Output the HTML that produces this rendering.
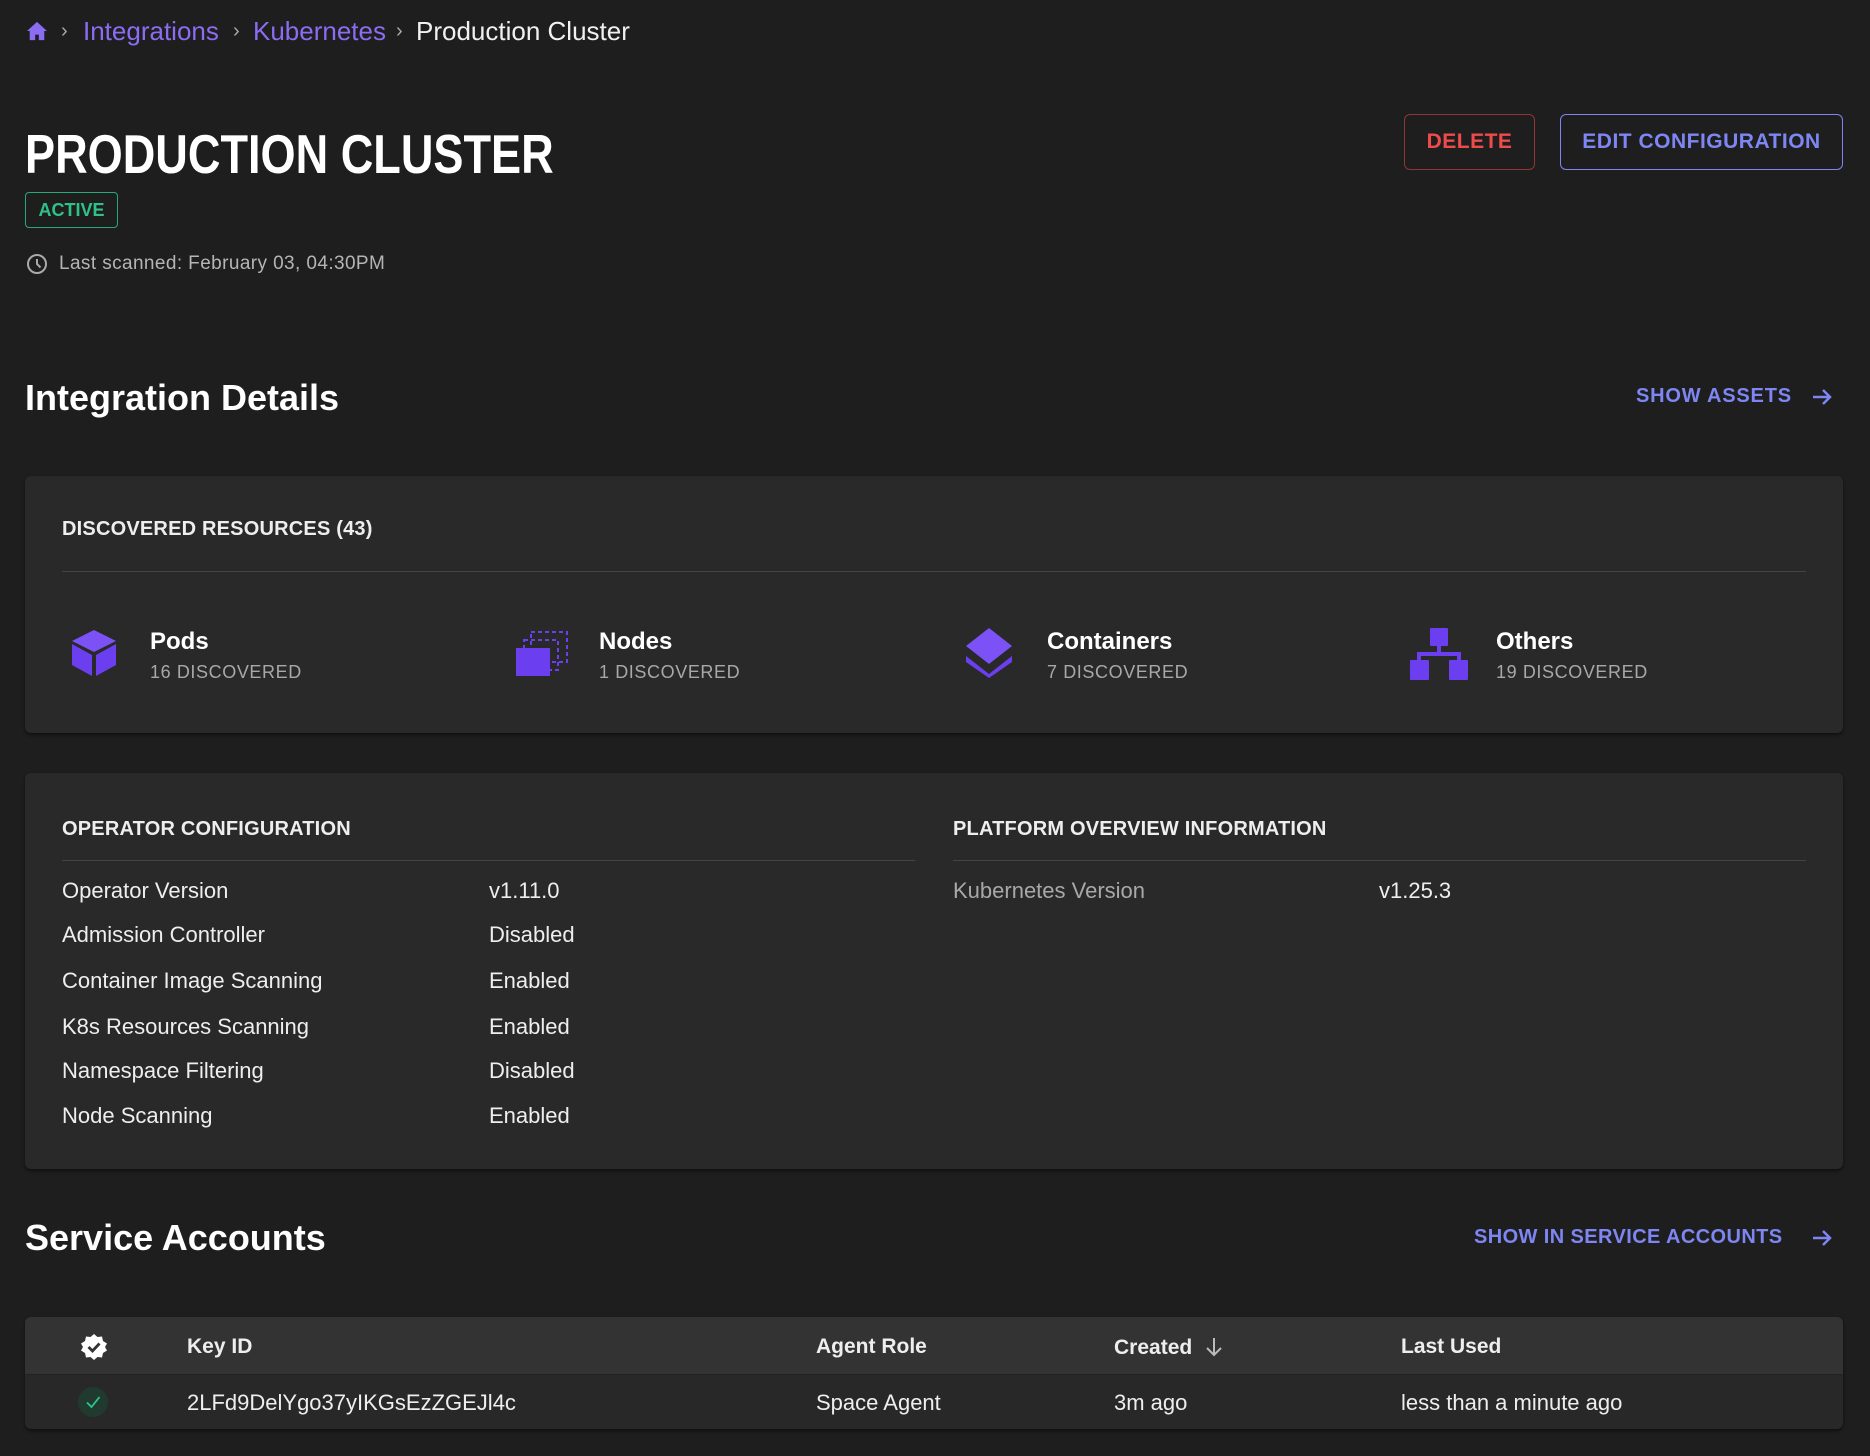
<!DOCTYPE html>
<html><head><meta charset="utf-8"><style>
*{margin:0;padding:0;box-sizing:border-box}
body{width:1870px;height:1456px;background:#1e1e1e;font-family:"Liberation Sans",sans-serif;color:#fff;position:relative;overflow:hidden}
.a{position:absolute;white-space:nowrap}
.bc{font-size:26px;top:16px}
.pur{color:#8b6cf3}
.sep{color:#aaa;font-size:20px;top:20px}
.btn{position:absolute;border-radius:6px;font-size:21px;font-weight:bold;letter-spacing:.5px;display:flex;align-items:center;justify-content:center}
.h2{font-size:36px;font-weight:bold}
.link{color:#7d86f2;font-size:20px;font-weight:bold;letter-spacing:.8px}
.card{position:absolute;left:25px;width:1818px;background:#292929;border-radius:6px;box-shadow:0 2px 3px rgba(0,0,0,.5)}
.ch{font-size:20px;font-weight:bold;letter-spacing:.2px;color:#eee}
.it{font-size:24px;font-weight:bold}
.sub{font-size:18px;color:#a8a8a8;letter-spacing:.6px}
.row{font-size:22px;color:#eee}
.th{font-size:21px;font-weight:bold;color:#eee}
</style></head><body>
<svg class="a" style="left:26px;top:21px" width="22" height="20" viewBox="0 0 24 22"><path d="M12 1 L1 11 H4 V21 H10 V15 H14 V21 H20 V11 H23 Z" fill="#8b6cf3"/></svg>
<div class="a sep" style="left:61px">›</div>
<div class="a bc pur" style="left:83px">Integrations</div>
<div class="a sep" style="left:233px">›</div>
<div class="a bc pur" style="left:253px">Kubernetes</div>
<div class="a sep" style="left:396px">›</div>
<div class="a bc" style="left:416px;color:#f0f0f0">Production Cluster</div>

<div class="a" style="left:25px;top:122px;font-size:55px;font-weight:bold;transform:scaleX(.82);transform-origin:left">PRODUCTION CLUSTER</div>
<div class="a" style="left:25px;top:192px;width:93px;height:36px;border:1px solid #27a878;border-radius:4px;color:#2ec28a;font-size:18px;font-weight:bold;text-align:center;line-height:34px">ACTIVE</div>
<svg class="a" style="left:26px;top:253px" width="22" height="22" viewBox="0 0 22 22"><circle cx="11" cy="11" r="9" fill="none" stroke="#aaa" stroke-width="2"/><path d="M11 6 V11 L14.5 14.5" fill="none" stroke="#aaa" stroke-width="2"/></svg>
<div class="a" style="left:59px;top:253px;font-size:19px;color:#b5b5b5;letter-spacing:.4px">Last scanned: February 03, 04:30PM</div>

<div class="btn" style="left:1404px;top:114px;width:131px;height:56px;border:1px solid #8e3636;color:#ef4b4b">DELETE</div>
<div class="btn" style="left:1560px;top:114px;width:283px;height:56px;border:1.5px solid #7d86f2;color:#7d86f2">EDIT CONFIGURATION</div>

<div class="a h2" style="left:25px;top:377px">Integration Details</div>
<div class="a link" style="left:1636px;top:385px">SHOW ASSETS</div>
<svg class="a" style="left:1810px;top:385px" width="24" height="24" viewBox="0 0 24 24"><path d="M3 12 H20 M13 5 L20 12 L13 19" fill="none" stroke="#7d86f2" stroke-width="2.5"/></svg>

<div class="card" style="top:476px;height:257px"></div>
<div class="a ch" style="left:62px;top:518px">DISCOVERED RESOURCES (43)</div>
<div class="a" style="left:62px;top:571px;width:1744px;height:1px;background:#444"></div>

<svg class="a" style="left:70px;top:628px" width="48" height="50" viewBox="0 0 48 50"><path d="M24 2 L46 13 L24 24 L2 13 Z" fill="#7c52f6"/><path d="M2 16 L22 27 V48 L2 37 Z" fill="#6b3ff0"/><path d="M46 16 L26 27 V48 L46 37 Z" fill="#6b3ff0"/></svg>
<div class="a it" style="left:150px;top:628px">Pods</div>
<div class="a sub" style="left:150px;top:662px">16 DISCOVERED</div>

<svg class="a" style="left:515px;top:630px" width="56" height="48" viewBox="0 0 56 48"><rect x="16" y="2" width="36" height="30" fill="none" stroke="#6b3ff0" stroke-width="2" stroke-dasharray="4 3"/><rect x="9" y="10" width="34" height="30" fill="none" stroke="#6b3ff0" stroke-width="2" stroke-dasharray="4 3"/><rect x="1" y="18" width="34" height="28" fill="#6b3ff0"/></svg>
<div class="a it" style="left:599px;top:628px">Nodes</div>
<div class="a sub" style="left:599px;top:662px">1 DISCOVERED</div>

<svg class="a" style="left:964px;top:626px" width="50" height="52" viewBox="0 0 50 52"><path d="M25 2 L48 20 L25 38 L2 20 Z" fill="#7c52f6"/><path d="M2 30 L25 48 L48 30 L48 36 L25 52 L2 36 Z" fill="#6b3ff0"/></svg>
<div class="a it" style="left:1047px;top:628px">Containers</div>
<div class="a sub" style="left:1047px;top:662px">7 DISCOVERED</div>

<svg class="a" style="left:1410px;top:628px" width="58" height="52" viewBox="0 0 58 52"><rect x="20" y="0" width="18" height="18" rx="1" fill="#6b3ff0"/><path d="M29 18 V26 M9 34 V26 H49 V34" fill="none" stroke="#6b3ff0" stroke-width="4"/><rect x="0" y="32" width="19" height="20" rx="1" fill="#6b3ff0"/><rect x="39" y="32" width="19" height="20" rx="1" fill="#6b3ff0"/></svg>
<div class="a it" style="left:1496px;top:628px">Others</div>
<div class="a sub" style="left:1496px;top:662px">19 DISCOVERED</div>

<div class="card" style="top:773px;height:396px"></div>
<div class="a ch" style="left:62px;top:818px">OPERATOR CONFIGURATION</div>
<div class="a ch" style="left:953px;top:818px">PLATFORM OVERVIEW INFORMATION</div>
<div class="a" style="left:62px;top:860px;width:853px;height:1px;background:#444"></div>
<div class="a" style="left:953px;top:860px;width:853px;height:1px;background:#444"></div>

<div class="a row" style="left:62px;top:878px">Operator Version</div><div class="a row" style="left:489px;top:878px">v1.11.0</div>
<div class="a row" style="left:62px;top:922px">Admission Controller</div><div class="a row" style="left:489px;top:922px">Disabled</div>
<div class="a row" style="left:62px;top:968px">Container Image Scanning</div><div class="a row" style="left:489px;top:968px">Enabled</div>
<div class="a row" style="left:62px;top:1014px">K8s Resources Scanning</div><div class="a row" style="left:489px;top:1014px">Enabled</div>
<div class="a row" style="left:62px;top:1058px">Namespace Filtering</div><div class="a row" style="left:489px;top:1058px">Disabled</div>
<div class="a row" style="left:62px;top:1103px">Node Scanning</div><div class="a row" style="left:489px;top:1103px">Enabled</div>
<div class="a row" style="left:953px;top:878px;color:#a8a8a8">Kubernetes Version</div><div class="a row" style="left:1379px;top:878px">v1.25.3</div>

<div class="a h2" style="left:25px;top:1217px">Service Accounts</div>
<div class="a link" style="left:1474px;top:1226px;letter-spacing:.4px">SHOW IN SERVICE ACCOUNTS</div>
<svg class="a" style="left:1810px;top:1226px" width="24" height="24" viewBox="0 0 24 24"><path d="M3 12 H20 M13 5 L20 12 L13 19" fill="none" stroke="#7d86f2" stroke-width="2.5"/></svg>

<div class="card" style="top:1317px;height:112px;background:#282828;overflow:hidden"><div style="height:58px;background:#333;border-bottom:1px solid #222"></div></div>
<svg class="a" style="left:80px;top:1333px" width="28" height="28" viewBox="0 0 28 28"><path d="M14 1 L17.5 4 L22 3.5 L23 8 L27 10.5 L25 14 L27 17.5 L23 20 L22 24.5 L17.5 24 L14 27 L10.5 24 L6 24.5 L5 20 L1 17.5 L3 14 L1 10.5 L5 8 L6 3.5 L10.5 4 Z" fill="#fff"/><path d="M8.5 14 L12.5 18 L19.5 10.5" fill="none" stroke="#333" stroke-width="2.8"/></svg>
<div class="a th" style="left:187px;top:1335px">Key ID</div>
<div class="a th" style="left:816px;top:1335px">Agent Role</div>
<div class="a th" style="left:1114px;top:1336px">Created</div>
<svg class="a" style="left:1204px;top:1336px" width="20" height="22" viewBox="0 0 20 22"><path d="M10 2 V19 M3 12 L10 19 L17 12" fill="none" stroke="#bbb" stroke-width="2"/></svg>
<div class="a th" style="left:1401px;top:1335px">Last Used</div>
<div class="a" style="left:78px;top:1387px;width:30px;height:30px;border-radius:50%;background:#213a30"></div>
<svg class="a" style="left:84px;top:1393px" width="18" height="18" viewBox="0 0 18 18"><path d="M3 9.5 L7.5 14 L15.5 4" fill="none" stroke="#2ec28a" stroke-width="1.8"/></svg>
<div class="a row" style="left:187px;top:1390px">2LFd9DelYgo37yIKGsEzZGEJl4c</div>
<div class="a row" style="left:816px;top:1390px">Space Agent</div>
<div class="a row" style="left:1114px;top:1390px">3m ago</div>
<div class="a row" style="left:1401px;top:1390px">less than a minute ago</div>
</body></html>
